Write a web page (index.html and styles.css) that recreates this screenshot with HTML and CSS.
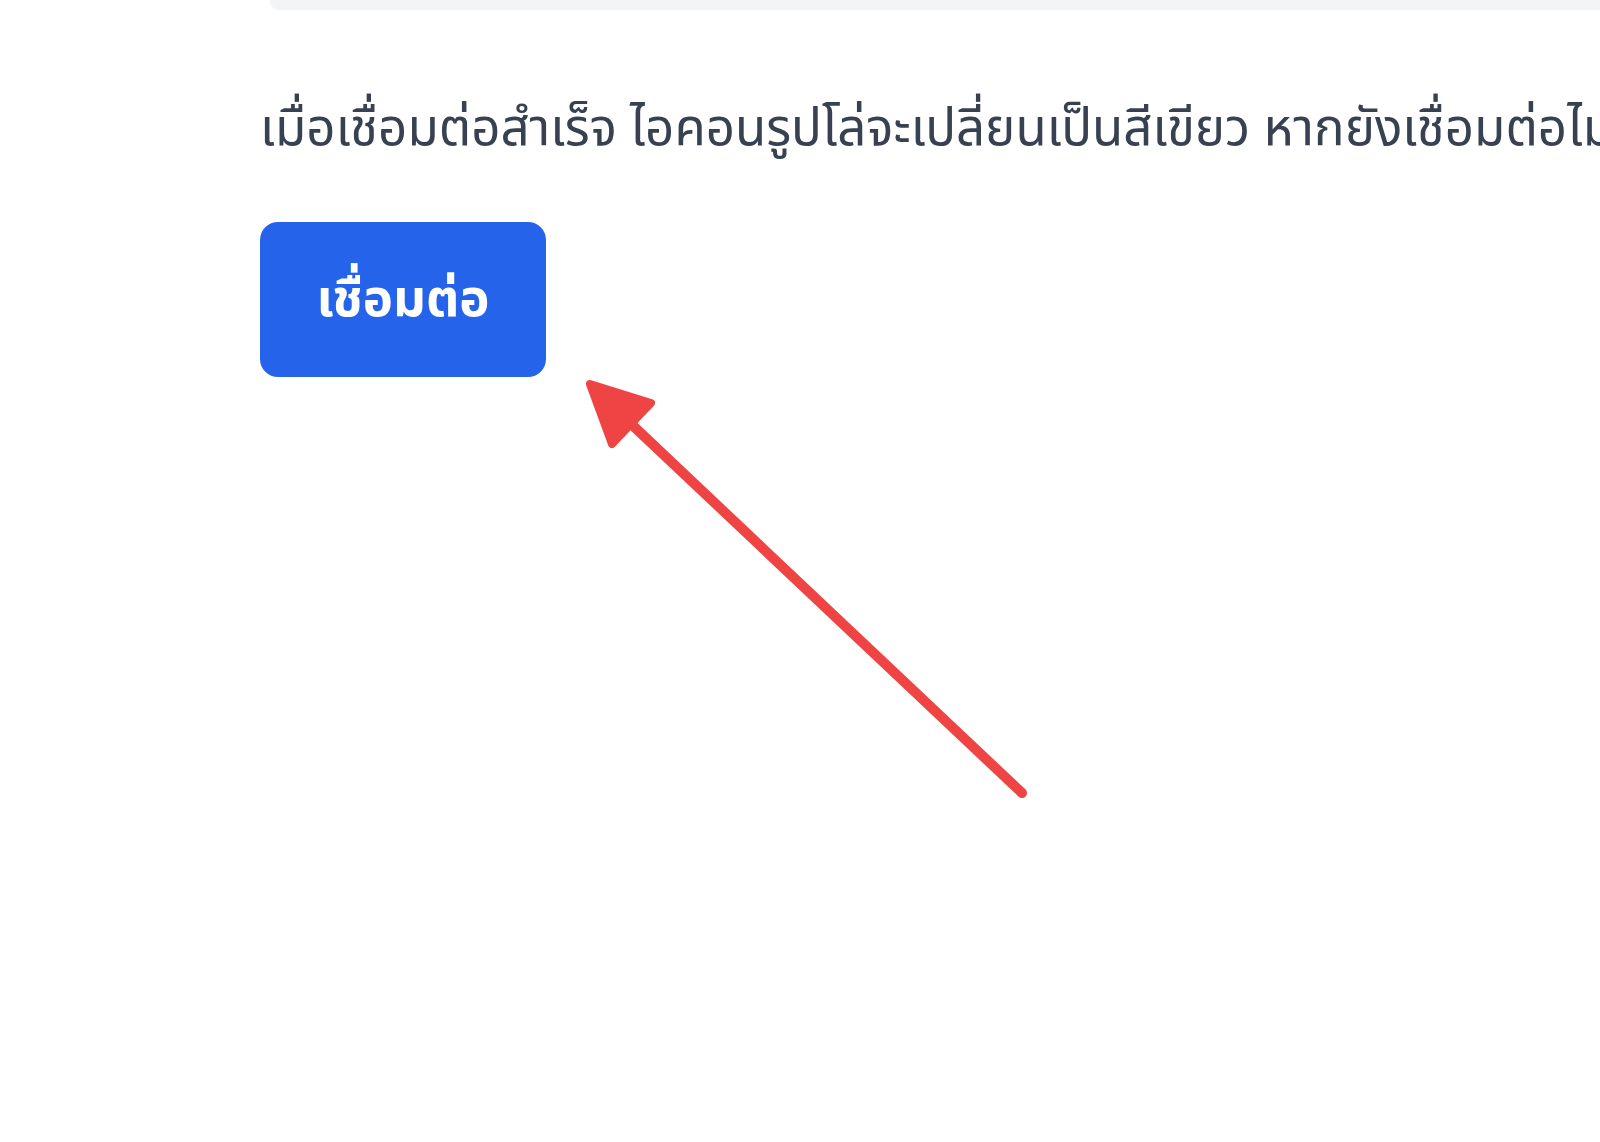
FILE: index.html
```html
<!DOCTYPE html>
<html lang="th">
<head>
  <meta charset="UTF-8" />
  <meta name="viewport" content="width=device-width, initial-scale=1.0" />
  <title>เชื่อมต่อ</title>
  <link rel="stylesheet" href="styles.css">
</head>
<body>
  <div class="page">
    <div class="card-bottom"></div>

    <p class="hint">เมื่อเชื่อมต่อสำเร็จ ไอคอนรูปโล่จะเปลี่ยนเป็นสีเขียว หากยังเชื่อมต่อไม่</p>

    <button class="connect">เชื่อมต่อ</button>
  </div>

  <!-- annotation arrow drawn over the page -->
  <svg class="arrow" width="1600" height="1142" viewBox="0 0 1600 1142">
    <line x1="1022" y1="793" x2="628" y2="421" stroke="#ef4444" stroke-width="10" stroke-linecap="round" />
    <polygon points="590,384 651,403 612,444" fill="#ef4444" stroke="#ef4444" stroke-width="8" stroke-linejoin="round" />
  </svg>
</body>
</html>
```

FILE: styles.css
```css
html, body {
  margin: 0;
  padding: 0;
  height: 100%;
  overflow: hidden;
}

body {
  background-color: #fff;
  font-family: "Noto Sans", "Noto Sans Thai", sans-serif;
  color: #374151;
}

.page {
  padding-left: 260px;
  overflow: hidden;
}

.card-bottom {
  height: 9px;
  margin-left: 10px;
  background-color: #f3f4f6;
  border-bottom-left-radius: 18px;
  box-shadow: 0 1px 2px rgba(0, 0, 0, 0.05);
}

.hint {
  margin: 80px 0 0 0;
  font-size: 51px;
  line-height: 72px;
  white-space: nowrap;
}

.connect {
  margin-top: 61px;
  width: 286px;
  height: 155px;
  border: none;
  border-radius: 18px;
  background-color: #2563eb;
  color: #fff;
  font-family: inherit;
  font-size: 51px;
  font-weight: 700;
  cursor: pointer;
}

.arrow {
  position: absolute;
  left: 0;
  top: 0;
  pointer-events: none;
}
```
